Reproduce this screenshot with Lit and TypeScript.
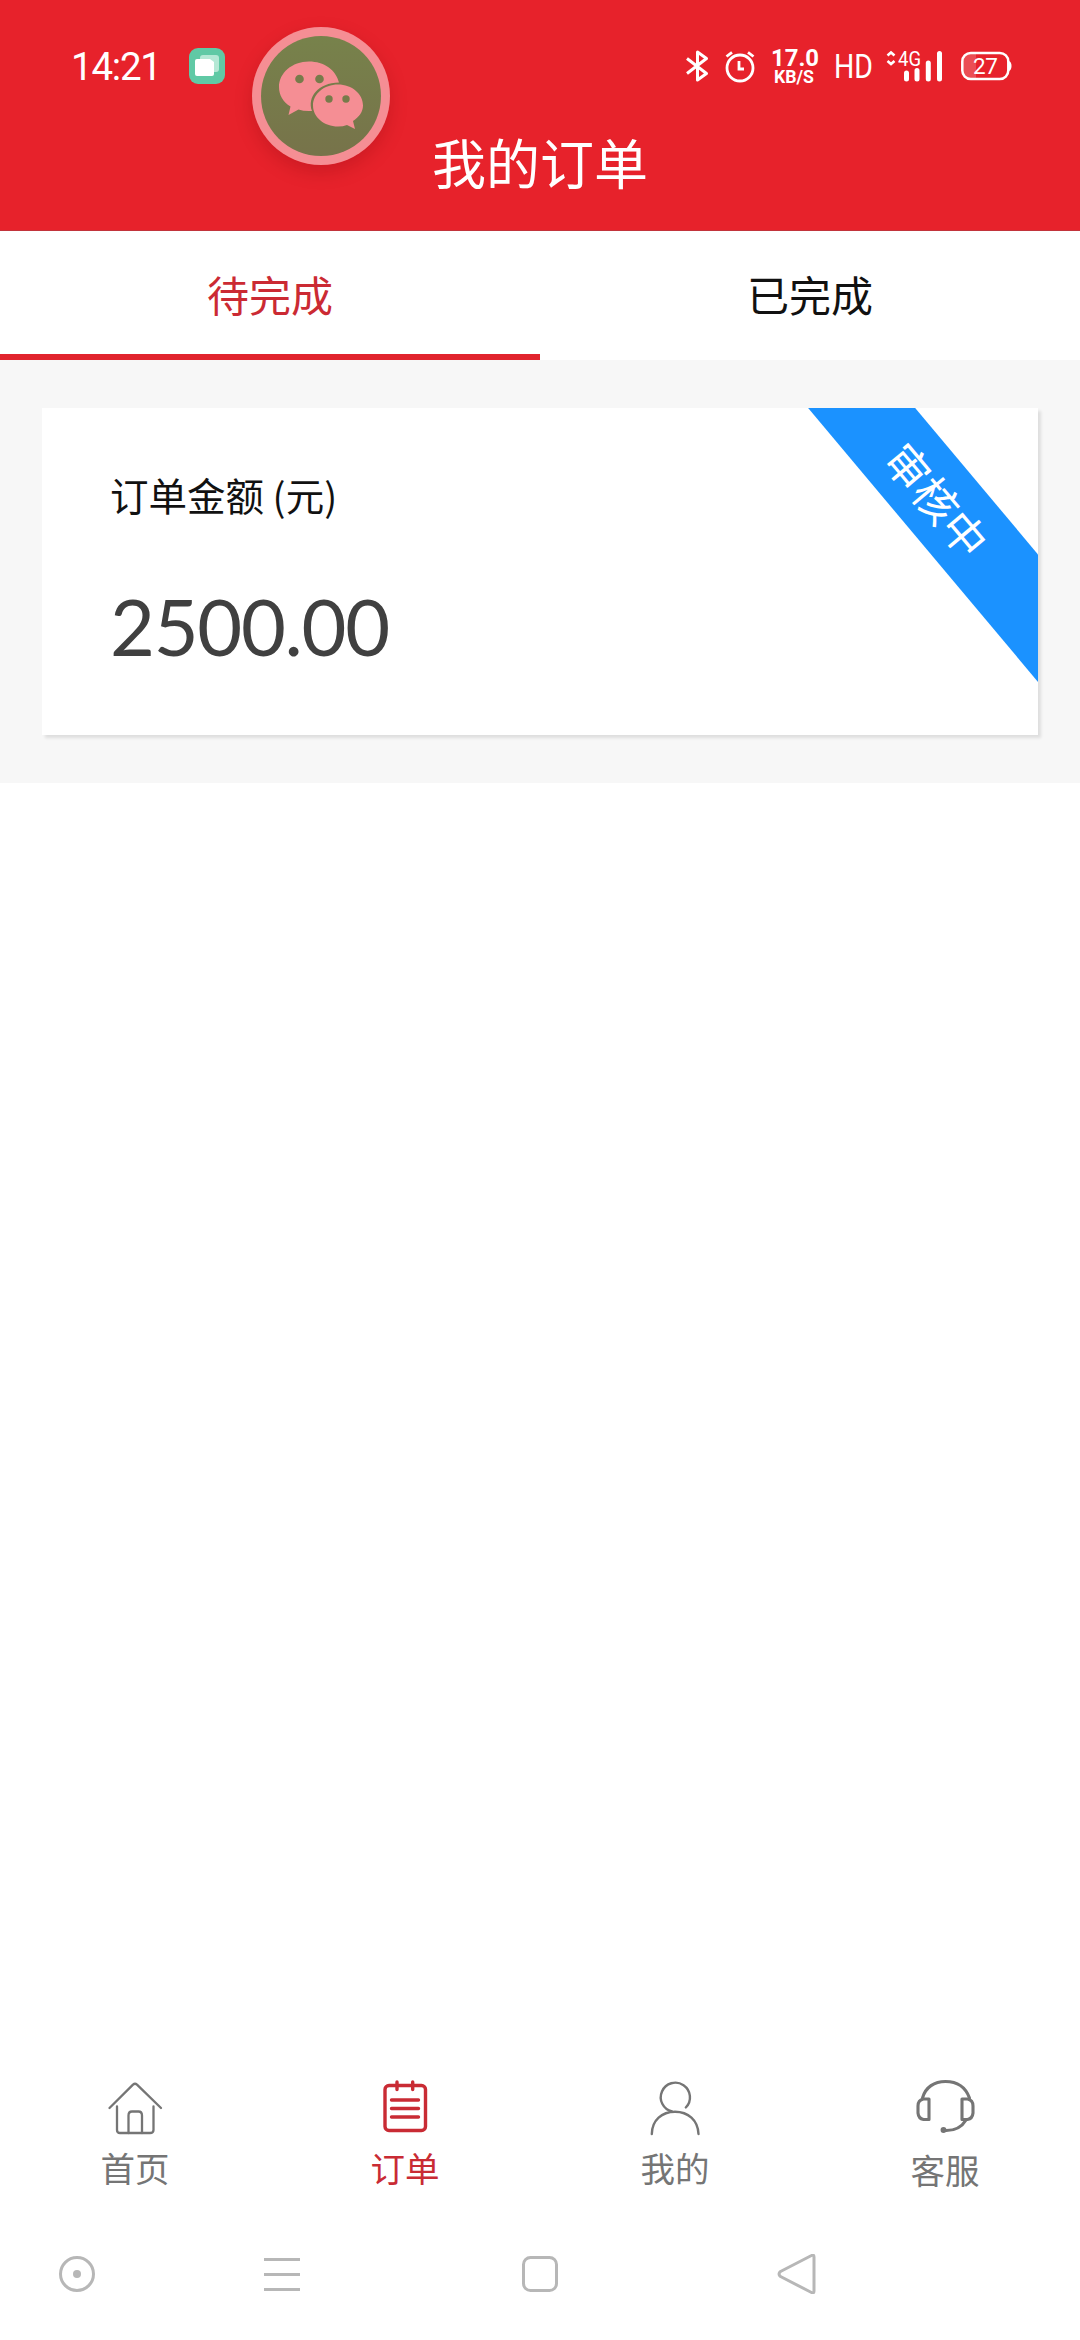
import { LitElement, html, css, svg } from "lit";
import { customElement, property } from "lit/decorators.js";

type NavItem = { key: string; label: string; active?: boolean };

const NAV: NavItem[] = [
  { key: "home", label: "首页" },
  { key: "orders", label: "订单", active: true },
  { key: "mine", label: "我的" },
  { key: "service", label: "客服" },
];

const NAV_ICONS: Record<string, unknown> = {
  home: svg`<g stroke-width="2.3">
      <path d="M4.500 31 L28 7.600 Q30 6 32 7.600 L56 31" />
      <path d="M12 29.500 V53 Q12 56 15 56 H45 Q48.500 56 48.500 53 V29.500" />
      <path d="M23.500 56 V38.500 Q23.500 34.500 27 34.500 H33.500 Q37 34.500 37 38.500 V56" />
    </g>`,
  orders: svg`<g stroke-width="3.4">
      <rect x="10" y="8.500" width="40.500" height="45" rx="4" />
      <path d="M22 5 V12.500 M37.700 5 V12.500 M16.500 23 H43.500 M16.500 31.500 H43.500 M16.500 40 H43.500" />
    </g>`,
  mine: svg`<g stroke-width="2.400">
      <path d="M27 34.500 A14.600 14.600 0 1 1 40.800 30.500" />
      <path d="M6.800 57 C7 43 17 34.700 30 34.700 C43 34.700 53 43 53.500 57" />
    </g>`,
  service: svg`<g stroke-width="3.100" transform="translate(0.500 1)">
      <path d="M7 20 C10 9 19 3.500 30 3.500 C41 3.500 50 9 54 20" />
      <path d="M13.500 21 H8 Q2.500 22 2.500 28 V35 Q3 40.500 8 41.500 H13.500 Z" />
      <path d="M46.500 21 H52 Q57.500 22 57.500 28 V35 Q57 40.500 52 41.500 H46.500 Z" />
      <path d="M50.500 42 C46 49.500 39 53 29 52.500" />
      <circle cx="28" cy="52" r="1.400" />
    </g>`,
};

@customElement("status-bar")
export class StatusBar extends LitElement {
  static styles = css`
    :host { display: flex; align-items: center; height: 132px; padding: 0 69px 0 71px; box-sizing: border-box; font-family: Roboto, "Liberation Sans", sans-serif; }
    svg { display: block; overflow: visible; flex: none; }
    .app { margin-left: 28px; }
    .right { margin-left: auto; display: flex; align-items: center; }
    .alarm { margin-left: 17px; }
    .speed { margin-left: 16px; }
    .hd { margin-left: 17px; }
    .signal { margin-left: 14px; }
    .battery { margin-left: 19px; }
    text { fill: #fff; }
  `;
  render() {
    return html`
      <svg width="90" height="40" viewBox="0 0 90 40"><text x="0" y="34" font-size="38.500" textLength="91" lengthAdjust="spacing">14:21</text></svg>
      <svg class="app" width="36" height="36" viewBox="0 0 36 36">
        <rect width="36" height="36" rx="9" fill="#60c9a5" />
        <rect x="11" y="7" width="19" height="17" rx="3" fill="#b5e8d5" />
        <path d="M8 11 H21 L25 14 V26 Q25 28 23 28 H8 Q6 28 6 26 V13 Q6 11 8 11Z" fill="#fff" />
      </svg>
      <div class="right">
        <svg width="22" height="40" viewBox="0 0 22 40" fill="none" stroke="#fff" stroke-width="3" stroke-linejoin="round">
          <path d="M1 12.500 L20.500 27.500 L11.500 34 V6 L20.500 12.500 L1 27.500" />
        </svg>
        <svg class="alarm" width="30" height="40" viewBox="0 0 30 40" fill="none" stroke="#fff" stroke-width="2.800">
          <circle cx="15" cy="22" r="13" /><path d="M14 15 V23 H19 M1.500 10.500 L7 6.300 M28.500 10.500 L23 6.300" />
        </svg>
        <svg class="speed" width="48" height="40" viewBox="0 0 48 40">
          <text x="0" y="20" font-size="24" font-weight="700" textLength="48" lengthAdjust="spacingAndGlyphs">17.0</text>
          <text x="3" y="37" font-size="17.500" font-weight="700" textLength="40" lengthAdjust="spacingAndGlyphs">KB/S</text>
        </svg>
        <svg class="hd" width="36" height="40" viewBox="0 0 36 40">
          <text x="-2" y="32" font-size="33" textLength="39" lengthAdjust="spacingAndGlyphs">HD</text>
        </svg>
        <svg class="signal" width="56" height="40" viewBox="0 0 56 40">
          <path d="M1.500 9.500 L5 6.500 L8.500 9.500 M1.500 15 L5 18 L8.500 15" fill="none" stroke="#fff" stroke-width="2.600" />
          <text x="12" y="20" font-size="20" textLength="23" lengthAdjust="spacingAndGlyphs">4G</text>
          <path d="M20.500 27 V33 M31 24.500 V33 M42.300 17 V33 M53.500 7.500 V33" fill="none" stroke="#fff" stroke-width="5" stroke-linecap="round" />
        </svg>
        <svg class="battery" width="50" height="40" viewBox="0 0 50 40">
          <path d="M10 7.500 H15 V32.500 H10 Q2 32.500 2 25 V15 Q2 7.500 10 7.500Z" fill="#fff" opacity=".2" />
          <rect x="1.300" y="7" width="46" height="26" rx="8.500" fill="none" stroke="#fff" stroke-width="2.500" />
          <path d="M48 15 Q50.500 16 50.500 20 Q50.500 24 48 25Z" fill="#fff" />
          <text x="12" y="27.500" font-size="22.500" textLength="25">27</text>
        </svg>
      </div>`;
  }
}

@customElement("chat-bubble")
export class ChatBubble extends LitElement {
  static styles = css`
    :host { display: block; width: 138px; height: 138px; border-radius: 50%; box-shadow: 0 7px 18px rgba(110, 0, 10, 0.22); }
    svg { display: block; }
  `;
  render() {
    return html`<svg width="138" height="138" viewBox="0 0 138 138">
      <defs><linearGradient id="g" x1="0" y1="0" x2="0" y2="1"><stop offset="0" stop-color="#77824b" /><stop offset="1" stop-color="#77734a" /></linearGradient></defs>
      <circle cx="69" cy="69" r="69" fill="#f58e94" />
      <circle cx="69" cy="69" r="60" fill="url(#g)" />
      <path d="M57 34.500 C40 34.500 27 46 27 60 C27 68 31 75 38.500 79.500 L36.500 88 L46.500 82.500 Q52 84.500 60 84 C55 70 66 56 87 55.500 C84 43 72 34.500 57 34.500Z" fill="#f58e94" />
      <path d="M86 57.500 C72 57.500 61 67 61 78.500 C61 90 72 99.500 86 99.500 Q91 99.500 95 98 L103 102 L101 94 C107 90 111 85 111 78.500 C111 67 100 57.500 86 57.500Z" fill="#f58e94" />
      <g fill="#777b4a"><circle cx="47.500" cy="52" r="4.300" /><circle cx="67.500" cy="52" r="4.300" /><circle cx="77" cy="72" r="3.700" /><circle cx="94" cy="72" r="3.700" /></g>
    </svg>`;
  }
}

@customElement("order-card")
export class OrderCard extends LitElement {
  @property() label = "";
  @property() amount = "";
  @property() status = "";
  static styles = css`
    :host { display: block; position: relative; overflow: hidden; height: 327px; padding: 61px 68px 0; box-sizing: border-box; background: #fff; }
    .label { font-size: 38.500px; line-height: 50px; color: #111; white-space: pre; }
    .amount { margin-top: 58px; font: 400 77.500px/100px Lato, "Noto Sans", sans-serif; letter-spacing: -1.300px; color: #404040; }
    .ribbon { position: absolute; left: 645.600px; top: 50.300px; width: 500px; height: 82px; display: flex; align-items: center; justify-content: center; background: #1b92ff; color: #fff; font-size: 44px; transform: rotate(50deg); }
  `;
  render() {
    return html`<div class="label">${this.label}</div>
      <div class="amount">${this.amount}</div>
      <div class="ribbon">${this.status}</div>`;
  }
}

@customElement("app-root")
export class AppRoot extends LitElement {
  static styles = css`
    :host { display: flex; flex-direction: column; position: relative; width: 1080px; height: 2340px; overflow: hidden; background: #fff; font-family: "Noto Sans CJK SC", "Noto Sans", sans-serif; }
    .header { flex: none; height: 231px; box-sizing: border-box; background: #e7222b; border-bottom: 1px solid #c2343b; color: #fff; }
    .title { margin: 0; height: 66px; line-height: 60px; text-align: center; font-size: 54px; font-weight: 400; }
    .bubble { position: absolute; left: 252px; top: 27px; }
    .tabs { flex: none; display: grid; grid-template-columns: 1fr 1fr; height: 129px; }
    .tab { display: flex; align-items: center; justify-content: center; border-bottom: 6px solid transparent; font-size: 42px; color: #111; padding-top: 2px; box-sizing: border-box; }
    .tab.on { color: #cb2a33; border-color: #e1242d; }
    .list { flex: none; padding: 48px 42px; background: #f7f7f7; }
    .card { box-shadow: 3px 3px 3px rgba(0, 0, 0, 0.1); }
    .nav { margin-top: auto; flex: none; display: grid; grid-template-columns: repeat(4, 1fr); height: 131px; }
    .item { display: flex; flex-direction: column; align-items: center; color: #757575; font-size: 34.500px; line-height: 50px; }
    .item.on { color: #c92b34; }
    .item svg { display: block; margin-bottom: 5px; fill: none; stroke: currentColor; stroke-linecap: round; stroke-linejoin: round; }
    .item:last-child svg { margin-bottom: 7px; }
    .system { flex: none; display: flex; height: 132px; padding: 46px 0 0 57px; box-sizing: border-box; }
    .system svg { display: block; width: 40px; height: 40px; fill: none; stroke: #b7b7b7; stroke-width: 3; stroke-linejoin: round; }
    .menu { margin-left: 165px; }
    .recent { margin-left: 218px; }
    .back { margin-left: 217px; }
  `;
  render() {
    return html`
      <header class="header">
        <status-bar></status-bar>
        <h1 class="title">我的订单</h1>
      </header>
      <chat-bubble class="bubble"></chat-bubble>
      <div class="tabs">
        <div class="tab on">待完成</div>
        <div class="tab">已完成</div>
      </div>
      <main class="list">
        <order-card class="card" label="订单金额 (元)" amount="2500.00" status="审核中"></order-card>
      </main>
      <nav class="nav">
        ${NAV.map(
          (n) => html`<div class="item ${n.active ? "on" : ""}">
            <svg width="60" height="60" viewBox="0 0 60 60">${NAV_ICONS[n.key]}</svg>${n.label}
          </div>`
        )}
      </nav>
      <div class="system">
        <svg viewBox="0 0 40 40"><circle cx="20" cy="20" r="16.500" /><circle cx="20" cy="20" r="4" fill="#b7b7b7" stroke="none" /></svg>
        <svg class="menu" viewBox="0 0 40 40"><path d="M2 5.500 H38 M2 20.500 H38 M2 35.500 H38" /></svg>
        <svg class="recent" viewBox="0 0 40 40"><rect x="3.500" y="3.500" width="33" height="33" rx="7" /></svg>
        <svg class="back" viewBox="0 0 40 40"><path d="M34.500 1.500 Q37 0 37 3 V37 Q37 40 34.500 38.500 L3.500 22.500 Q0.500 20 3.500 17.500 Z" /></svg>
      </div>`;
  }
}
